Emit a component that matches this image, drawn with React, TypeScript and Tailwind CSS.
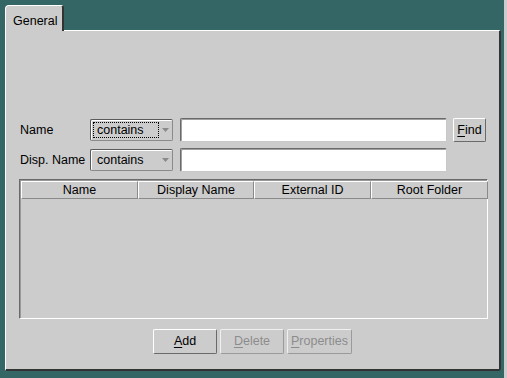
import React from "react";

const font = { fontFamily: '"Liberation Sans", Arial, sans-serif' };

function Select({ focused }: { focused?: boolean }) {
  return (
    <div className="w-[83px] h-[22px] rounded-[2px] border border-t-[#5a5a5a] border-l-[#5a5a5a] border-b-[#8a8a8a] border-r-[#8a8a8a] bg-[#cccccc] flex items-center pl-[2px] shadow-[inset_1px_1px_0_#ffffff]">
      <span
        className={
          "w-[66px] h-[16px] leading-[15px] pl-[3px] text-[12.5px] text-black " +
          (focused ? "border border-dotted border-black" : "border border-transparent")
        }
      >
        contains
      </span>
      <svg width="7" height="4" viewBox="0 0 7 4" className="ml-[3px]">
        <path d="M0 0 H7 L3.5 4 Z" fill="#8a8a8a" />
      </svg>
    </div>
  );
}

function TextInput() {
  return (
    <div className="w-[267px] h-[24px] rounded-[2px] bg-white border border-t-[#6a6a6a] border-l-[#6a6a6a] border-b-[#c8c8c8] border-r-[#c8c8c8] shadow-[inset_1px_1px_0_#a0a0a0]" />
  );
}

function Btn({ u, rest, disabled, w }: { u: string; rest: string; disabled?: boolean; w: string }) {
  return (
    <div
      className={
        "h-[25px] flex items-center justify-center text-[12.5px] rounded-[2px] border " +
        w +
        (disabled
          ? " text-[#8c8c8c] border-t-[#f0f0f0] border-l-[#f0f0f0] border-b-[#9a9a9a] border-r-[#9a9a9a]"
          : " text-black border-t-[#ffffff] border-l-[#ffffff] border-b-[#6a6a6a] border-r-[#6a6a6a]")
      }
    >
      <span>
        <span className="underline underline-offset-2">{u}</span>
        {rest}
      </span>
    </div>
  );
}

export default function App() {
  const cols = [
    { n: "Name", w: "w-[117px]" },
    { n: "Display Name", w: "w-[116px]" },
    { n: "External ID", w: "w-[117px]" },
    { n: "Root Folder", w: "flex-1" },
  ];
  return (
    <div style={font} className="w-[507px] h-[378px] bg-[#336664] flex overflow-hidden">
      <div className="w-[501px] flex flex-col pl-[5px] pt-[5px] pb-[7px]">
        {/* tab */}
        <div className="w-[59px] h-[26px] bg-[#cccccc] border-t border-l border-white border-r-2 border-r-[#333333] rounded-tl-[4px] rounded-tr-[3px] flex items-start pl-[7px] pt-[6px] text-[12.5px] text-black relative z-10 -mb-[1px]">
          General
        </div>
        {/* panel */}
        <div className="flex-1 bg-[#cccccc] border-t border-l border-white border-r-2 border-b-2 border-r-[#333333] border-b-[#333333] rounded-br-[3px] flex flex-col pl-[12px] pt-[87px] text-[12.5px] text-black">
          <div className="flex items-center h-[24px]">
            <span className="w-[72px] pl-[2px]">Name</span>
            <Select focused />
            <div className="ml-[7px]">
              <TextInput />
            </div>
            <div className="ml-[6px] w-[33px] h-[24px] rounded-[2px] border border-t-white border-l-white border-b-[#6a6a6a] border-r-[#6a6a6a] flex items-center justify-center">
              <span>
                <span className="underline underline-offset-2">F</span>ind
              </span>
            </div>
          </div>
          <div className="flex items-center h-[24px] mt-[6px]">
            <span className="w-[72px] pl-[2px]">Disp. Name</span>
            <Select />
            <div className="ml-[7px]">
              <TextInput />
            </div>
          </div>
          {/* table */}
          <div className="mt-[7px] ml-[1px] w-[469px] h-[140px] border border-t-[#6a6a6a] border-l-[#6a6a6a] border-b-white border-r-white shadow-[inset_1px_1px_0_#999999] pl-[1px] pt-[1px]">
            <div className="flex h-[18px] w-[467px]">
              {cols.map((c) => (
                <div
                  key={c.n}
                  className={
                    c.w +
                    " h-[18px] flex items-center justify-center border-t border-l border-t-white border-l-white border-b border-r border-b-[#8a8a8a] border-r-[#8a8a8a] text-[12.5px] leading-none"
                  }
                >
                  {c.n}
                </div>
              ))}
            </div>
          </div>
          {/* buttons */}
          <div className="flex mt-[10px] ml-[135px] gap-[3px]">
            <Btn u="A" rest="dd" w="w-[64px]" />
            <Btn u="D" rest="elete" w="w-[64px]" disabled />
            <Btn u="P" rest="roperties" w="w-[65px]" disabled />
          </div>
        </div>
      </div>
      <div className="w-[3px] ml-[3px] h-full bg-[#cccccc]" />
    </div>
  );
}
